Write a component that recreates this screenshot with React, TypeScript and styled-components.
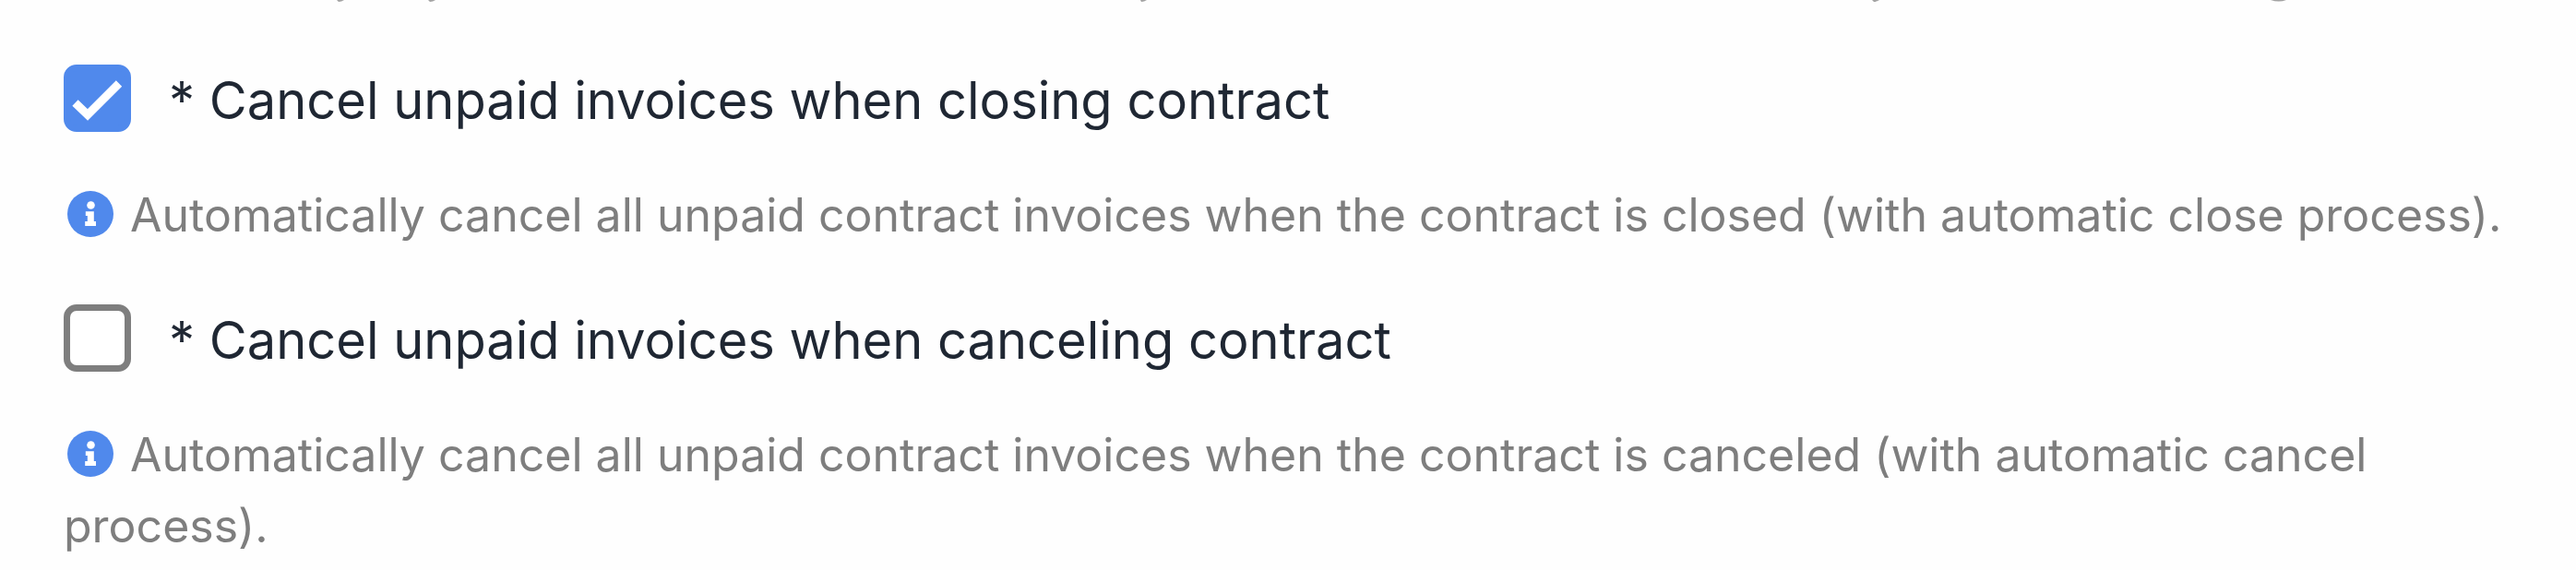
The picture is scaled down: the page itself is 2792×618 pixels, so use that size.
import React, { useId, useState } from "react";
import styled, { createGlobalStyle } from "styled-components";

const GlobalStyle = createGlobalStyle`
  *, *::before, *::after { box-sizing: border-box; }
  body {
    margin: 0;
    background: #fefefe;
    font-family: Inter, "Liberation Sans", sans-serif;
  }
`;

const Page = styled.main`
  padding: 0 69px 8px;
`;

const PreviousLine = styled.svg`
  display: block;
  width: 100%;
  height: 2px;
  fill: #a3a3a3;
`;

const Settings = styled.div`
  display: flex;
  flex-direction: column;
  gap: 58px;
  padding-top: 68px;
`;

const Field = styled.div`
  display: flex;
  flex-direction: column;
  gap: 52px;
`;

const Label = styled.label`
  display: flex;
  align-items: flex-start;
  gap: 41px;
  height: 73px;
  font-size: 56px;
  line-height: 78px;
  color: #1f2733;
  cursor: pointer;
`;

const CheckControl = styled.span`
  display: grid;
  flex: none;
  width: 73px;
  height: 73px;

  > * { grid-area: 1 / 1; }
`;

const Checkbox = styled.input`
  appearance: none;
  width: 73px;
  height: 73px;
  margin: 0;
  border: 7px solid #7e7e7e;
  border-radius: 14px;
  background: #ffffff;
  cursor: pointer;

  &:checked {
    border-color: #5089ec;
    background: #5089ec;
  }
`;

const CheckMark = styled.svg`
  width: 73px;
  height: 73px;
  fill: none;
  stroke: #ffffff;
  stroke-width: 9;
  pointer-events: none;
`;

const Help = styled.p`
  margin: 0;
  font-size: 50px;
  line-height: 77px;
  color: #7e7e7e;
`;

const InfoMark = styled.svg`
  display: inline-block;
  width: 50px;
  height: 50px;
  margin: 0 18px 0 4px;
  vertical-align: -6px;
`;

function InfoIcon() {
  return (
    <InfoMark viewBox="0 0 50 50" aria-hidden="true">
      <circle cx="25" cy="25" r="25" fill="#5089ec" />
      <circle cx="25.5" cy="15.5" r="4.3" fill="#fff" />
      <path d="M19.8 22.3h9v10.8h2.2v4.9H19.2v-4.9h2.6v-6h-2z" fill="#fff" />
    </InfoMark>
  );
}

interface CheckFieldProps {
  label: string;
  help: string;
  initial?: boolean;
}

function CheckField({ label, help, initial = false }: CheckFieldProps) {
  const id = useId();
  const [checked, setChecked] = useState(initial);
  return (
    <Field>
      <Label htmlFor={id}>
        <CheckControl>
          <Checkbox
            id={id}
            type="checkbox"
            checked={checked}
            aria-describedby={`${id}-help`}
            onChange={(event) => setChecked(event.target.checked)}
          />
          {checked && (
            <CheckMark viewBox="0 0 73 73" aria-hidden="true">
              <path d="M12.5 41.5 L26 54.5 L60 20.5" />
            </CheckMark>
          )}
        </CheckControl>
        <span>* {label}</span>
      </Label>
      <Help id={`${id}-help`}>
        <InfoIcon />
        {help}
      </Help>
    </Field>
  );
}

export default function App() {
  return (
    <>
      <GlobalStyle />
      <Page>
        <PreviousLine aria-hidden="true">
          <path d="M296 0h8q-3 2-6 2zM395 0h8q-3 2-6 2zM1167 0h7q-3 2-6 2zM1960 0h8q-3 2-6 2zM2392 0h17q-8 3-17 0z" />
        </PreviousLine>
        <Settings>
          <CheckField
            initial
            label="Cancel unpaid invoices when closing contract"
            help="Automatically cancel all unpaid contract invoices when the contract is closed (with automatic close process)."
          />
          <CheckField
            label="Cancel unpaid invoices when canceling contract"
            help="Automatically cancel all unpaid contract invoices when the contract is canceled (with automatic cancel process)."
          />
        </Settings>
      </Page>
    </>
  );
}
